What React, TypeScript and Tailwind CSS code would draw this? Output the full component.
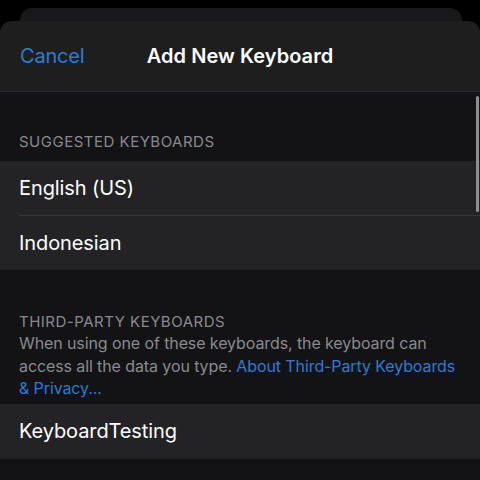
export default function App() {
  return (
    <div className="h-[480px] w-[480px] overflow-hidden bg-black flex flex-col pt-2 font-['Inter',sans-serif] antialiased">
      {/* sheet underneath */}
      <div className="ml-5 mr-[18px] h-[13px] rounded-t-[12px] bg-[#18181a]" />

      <div className="relative flex-1 flex flex-col rounded-t-[12px] bg-[#131315] overflow-hidden">
        <header className="relative h-[71px] shrink-0 flex items-center bg-[#1e1e1e] border-b border-[#2c2c2e]">
          <button className="ml-5 text-[20px] text-[#2f7ad6] tracking-[-0.2px]">Cancel</button>
          <h1 className="absolute inset-x-0 text-center text-[20px] font-semibold text-white tracking-[0.05px] pointer-events-none">
            Add New Keyboard
          </h1>
        </header>

        <section className="pt-[40px]">
          <h2 className="pl-[19px] pb-[9px] text-[15px] leading-[20px] text-[#8a8a8e] uppercase tracking-[0.5px]">
            Suggested Keyboards
          </h2>
          <ul className="bg-[#232325]">
            <li className="h-[55px] flex items-center pl-[19px]">
              <div className="flex-1 h-full flex items-center border-b border-[#38383a] text-[20px] text-white tracking-[-0.1px]">
                English (US)
              </div>
            </li>
            <li className="h-[54px] flex items-center px-[19px] text-[20px] text-white tracking-[-0.1px]">Indonesian</li>
          </ul>
        </section>

        <section className="pt-[42px]">
          <h2 className="pl-[19px] text-[15px] leading-[20px] text-[#8a8a8e] uppercase tracking-[0.5px]">
            Third-Party Keyboards
          </h2>
          <p className="pl-[19px] pr-3 pb-[4px] text-[16px] leading-[22.5px] text-[#8a8a8e] tracking-[-0.1px]">
            When using one of these keyboards, the keyboard can access all the data you type.{" "}
            <a className="text-[#2f7ad6]">About Third-Party Keyboards &amp; Privacy...</a>
          </p>
          <ul className="bg-[#232325]">
            <li className="h-[55px] flex items-center px-[19px] text-[20px] text-white tracking-[-0.1px]">KeyboardTesting</li>
          </ul>
        </section>

        {/* scroll indicator */}
        <div className="absolute right-[1px] top-[75px] h-[116px] w-[3px] rounded-full bg-[#8e8e90]" />
      </div>
    </div>
  );
}
